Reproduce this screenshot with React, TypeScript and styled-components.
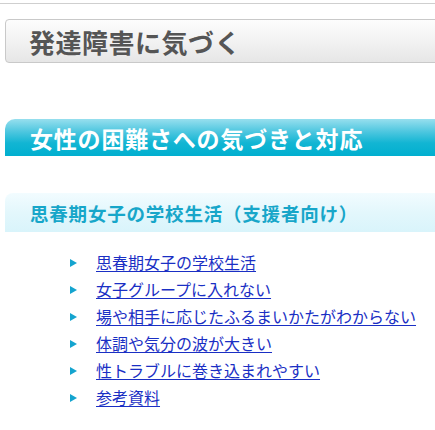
import React from "react";
import styled, { createGlobalStyle } from "styled-components";

// Styles
const GlobalStyle = createGlobalStyle`
  html, body {
    margin: 0;
    padding: 0;
    background: #fff;
    overflow: hidden;
  }
  body {
    font-family: "Noto Sans CJK JP", "Noto Sans", sans-serif;
  }
`;

const Page = styled.div`
  width: 435px;
  padding-top: 3px;
  overflow: hidden;
`;

const TopRule = styled.div`
  border-top: 1px solid #cfcfcf;
`;

const Main = styled.main`
  padding-left: 5px;
  width: 460px;
`;

const PageTitle = styled.h1`
  margin: 15px 0 0;
  height: 44px;
  box-sizing: border-box;
  display: flex;
  align-items: center;
  padding-left: 23px;
  border: 1px solid #c9c9c9;
  border-radius: 4px;
  background: linear-gradient(to bottom, #fdfdfd 0%, #f1f1f1 55%, #e6e6e6 100%);
  color: #555;
  font-size: 26px;
  font-weight: 700;
  letter-spacing: 0.5px;
`;

const SectionBar = styled.h2`
  margin: 56px 0 0;
  height: 37px;
  display: flex;
  align-items: center;
  padding-left: 25px;
  border-top-left-radius: 10px;
  background: linear-gradient(to bottom, #97dfee 0%, #4cc6df 35%, #12b5d3 65%, #00afcf 100%);
  color: #fff;
  font-size: 23px;
  font-weight: 700;
  letter-spacing: 0.8px;
`;

const SubHeading = styled.h3`
  margin: 37px 0 0;
  height: 39px;
  display: flex;
  align-items: center;
  padding-left: 25px;
  border-top-left-radius: 8px;
  background: linear-gradient(to bottom, #f2fcff 0%, #e3f7fc 50%, #d9f4fb 100%);
  color: #17a6c9;
  font-size: 18.5px;
  font-weight: 700;
  letter-spacing: 0.8px;
`;

const LinkList = styled.ul`
  list-style: none;
  margin: 17px 0 0;
  padding: 0 0 0 65px;
`;

const LinkItem = styled.li`
  display: flex;
  align-items: center;
  height: 27px;
`;

const Bullet = styled.span`
  width: 0;
  height: 0;
  margin-right: 19px;
  border-top: 4px solid transparent;
  border-bottom: 4px solid transparent;
  border-left: 7px solid #14a4cf;
`;

const ItemLink = styled.a`
  color: #1a2fc4;
  font-size: 16px;
  line-height: 1.2;
  text-decoration: underline;
  text-underline-offset: 2px;
`;

const links = [
  "思春期女子の学校生活",
  "女子グループに入れない",
  "場や相手に応じたふるまいかたがわからない",
  "体調や気分の波が大きい",
  "性トラブルに巻き込まれやすい",
  "参考資料",
];

const App: React.FC = () => {
  return (
    <Page>
      <GlobalStyle />
      <TopRule />
      <Main>
        <PageTitle>発達障害に気づく</PageTitle>
        <SectionBar>女性の困難さへの気づきと対応</SectionBar>
        <SubHeading>思春期女子の学校生活（支援者向け）</SubHeading>
        <LinkList>
          {links.map((label) => (
            <LinkItem key={label}>
              <Bullet />
              <ItemLink href="#">{label}</ItemLink>
            </LinkItem>
          ))}
        </LinkList>
      </Main>
    </Page>
  );
};

export default App;
